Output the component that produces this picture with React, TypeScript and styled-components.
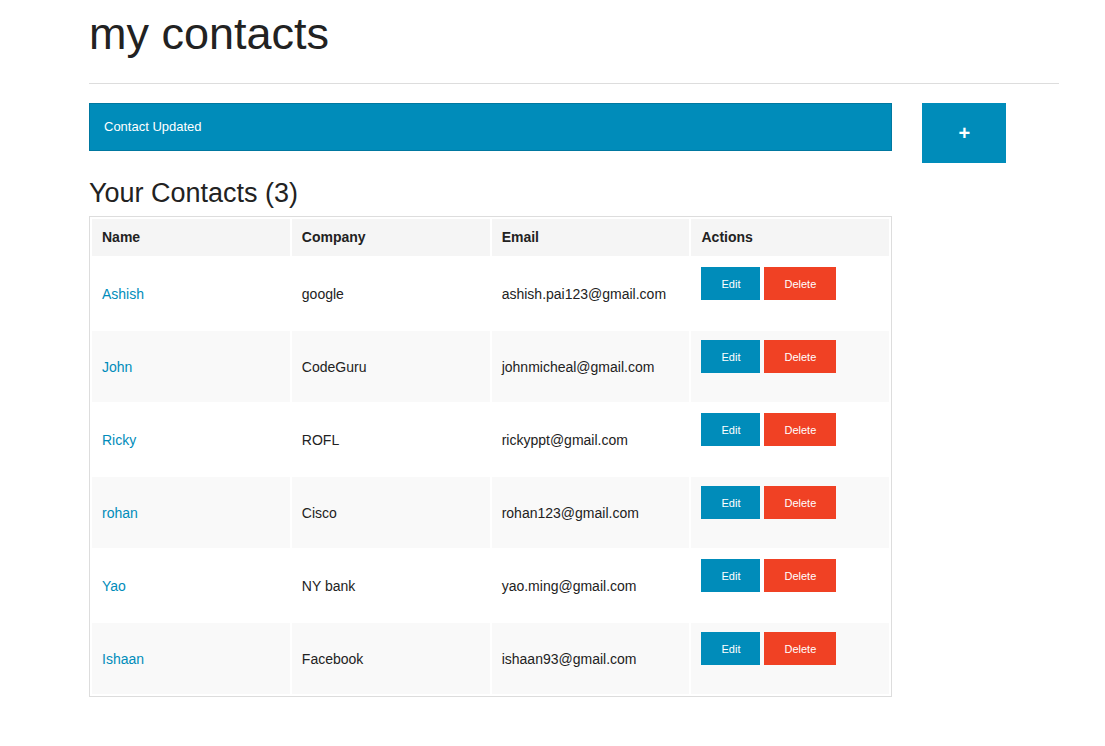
import React from "react";
import styled, { createGlobalStyle } from "styled-components";

const GlobalStyle = createGlobalStyle`
  html, body {
    margin: 0;
    padding: 0;
    background: #ffffff;
  }
  body {
    font-family: "Liberation Sans", Arial, Helvetica, sans-serif;
    color: #222222;
  }
  * { box-sizing: border-box; }
`;

const Page = styled.div`
  width: 1000px;
  margin-left: 74px;
`;

const HeaderColumn = styled.header`
  padding: 0 15px;
`;

const Title = styled.h1`
  margin: 3px 0 0;
  font-size: 45px;
  line-height: 62px;
  font-weight: normal;
  color: #222222;
`;

const Divider = styled.hr`
  margin: 18px 0 19px;
  border: 0;
  border-top: 1px solid #dddddd;
  height: 0;
`;

const Row = styled.div`
  display: flex;
`;

const MainColumn = styled.main`
  flex: 0 0 833.33px;
  padding: 0 15px;
`;

const SideColumn = styled.aside`
  flex: 1 1 auto;
  padding: 0 15px;
`;

const Alert = styled.div`
  background: #008cba;
  border: 1px solid #0078a0;
  color: #ffffff;
  font-size: 13px;
  line-height: 18px;
  padding: 14px 24px 14px 14px;
  margin-bottom: 24px;
`;

const SectionTitle = styled.h3`
  margin: 0 0 4px;
  font-size: 27px;
  line-height: 37px;
  font-weight: normal;
  color: #222222;
`;

const Table = styled.table`
  width: 100%;
  table-layout: fixed;
  border-collapse: separate;
  border-spacing: 2px;
  border: 1px solid #dddddd;
  background: #ffffff;
`;

const HeadCell = styled.th`
  width: 25%;
  background: #f5f5f5;
  text-align: left;
  font-size: 14px;
  line-height: 18px;
  font-weight: bold;
  color: #222222;
  padding: 9px 10px 10px;
`;

const BodyRow = styled.tr<{ $striped: boolean }>`
  background: ${(p) => (p.$striped ? "#f9f9f9" : "#ffffff")};
`;

const Cell = styled.td`
  font-size: 14px;
  line-height: 18px;
  color: #222222;
  padding: 9px 10px;
  vertical-align: middle;
`;

const NameLink = styled.a`
  color: #008cba;
  text-decoration: none;
`;

const ActionGroup = styled.div`
  display: flex;
  gap: 4px;
  margin-bottom: 20px;
`;

const SmallButton = styled.button<{ $variant: "primary" | "alert" }>`
  height: 33px;
  padding: 0 20px;
  border: 0;
  margin: 0;
  font-family: "Liberation Sans", Arial, Helvetica, sans-serif;
  font-size: 11px;
  color: #ffffff;
  cursor: pointer;
  background: ${(p) => (p.$variant === "primary" ? "#008cba" : "#f04124")};
`;

const AddButton = styled.button`
  width: 84px;
  height: 60px;
  border: 0;
  margin: 0;
  background: #008cba;
  color: #ffffff;
  font-family: "Liberation Sans", Arial, Helvetica, sans-serif;
  font-size: 20px;
  font-weight: bold;
  line-height: 1;
  cursor: pointer;
`;

const contacts = [
  { name: "Ashish", company: "google", email: "ashish.pai123@gmail.com" },
  { name: "John", company: "CodeGuru", email: "johnmicheal@gmail.com" },
  { name: "Ricky", company: "ROFL", email: "rickyppt@gmail.com" },
  { name: "rohan", company: "Cisco", email: "rohan123@gmail.com" },
  { name: "Yao", company: "NY bank", email: "yao.ming@gmail.com" },
  { name: "Ishaan", company: "Facebook", email: "ishaan93@gmail.com" },
];

export default function App() {
  return (
    <>
      <GlobalStyle />
      <Page>
        <HeaderColumn>
          <Title>my contacts</Title>
          <Divider />
        </HeaderColumn>
        <Row>
          <MainColumn>
            <Alert>Contact Updated</Alert>
            <SectionTitle>Your Contacts (3)</SectionTitle>
            <Table>
              <thead>
                <tr>
                  <HeadCell>Name</HeadCell>
                  <HeadCell>Company</HeadCell>
                  <HeadCell>Email</HeadCell>
                  <HeadCell>Actions</HeadCell>
                </tr>
              </thead>
              <tbody>
                {contacts.map((c, i) => (
                  <BodyRow key={c.email} $striped={i % 2 === 1}>
                    <Cell>
                      <NameLink href="#">{c.name}</NameLink>
                    </Cell>
                    <Cell>{c.company}</Cell>
                    <Cell>{c.email}</Cell>
                    <Cell>
                      <ActionGroup>
                        <SmallButton $variant="primary">Edit</SmallButton>
                        <SmallButton $variant="alert">Delete</SmallButton>
                      </ActionGroup>
                    </Cell>
                  </BodyRow>
                ))}
              </tbody>
            </Table>
          </MainColumn>
          <SideColumn>
            <AddButton>+</AddButton>
          </SideColumn>
        </Row>
      </Page>
    </>
  );
}
